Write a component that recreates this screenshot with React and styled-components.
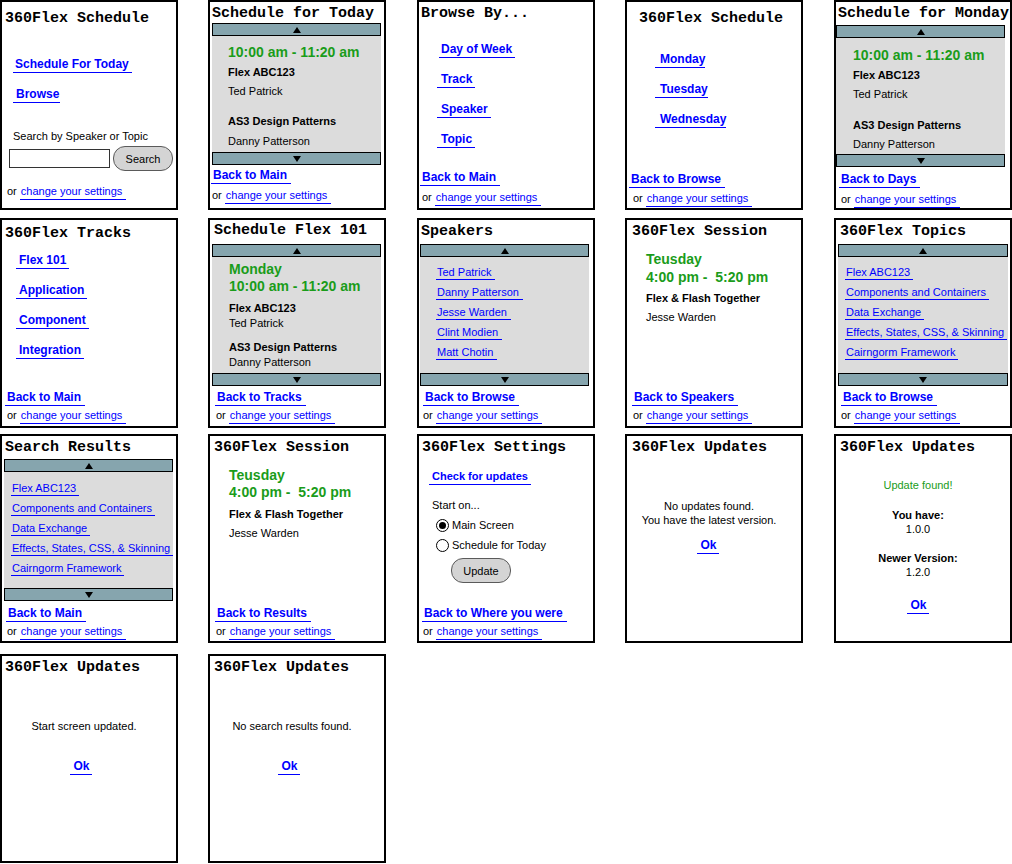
import React from 'react';
import styled, { createGlobalStyle } from 'styled-components';

const BLUE = '#0000ff';
const GREEN = '#1a9c1a';
const BAR = '#86a5ae';
const LIST_BG = '#dcdcdc';
const SANS = '"Liberation Sans", Arial, sans-serif';
const MONO = '"Liberation Mono", "Courier New", monospace';

const GlobalStyle = createGlobalStyle`
  html, body {
    margin: 0;
    padding: 0;
    background: #fff;
  }
  body {
    font-family: ${SANS};
  }
`;

const Board = styled.div`
  display: grid;
  grid-template-columns: 208px 209px 208px 209px 178px;
  grid-template-rows: 218px 216px 220px 210px;
  align-items: start;
  width: 1012px;
  height: 864px;
`;

const Screen = styled.div`
  box-sizing: border-box;
  width: 178px;
  height: ${props => props.$h || 210}px;
  border: 2px solid #000;
  background: #fff;
  display: flex;
  flex-direction: column;
  align-items: flex-start;
  overflow: hidden;
  font-family: ${SANS};
  color: #000;
`;

const Title = styled.div`
  font-family: ${MONO};
  font-weight: bold;
  font-size: 15px;
  line-height: 17px;
  white-space: nowrap;
  margin: ${props => props.$top}px 0 0 ${props => props.$left}px;
`;

const NavList = styled.div`
  display: flex;
  flex-direction: column;
  align-items: flex-start;
  gap: ${props => props.$gap ?? 14}px;
  margin: ${props => props.$top}px 0 0 ${props => props.$left}px;
`;

const NavLink = styled.span`
  display: inline-block;
  font-size: ${props => props.$size || 12}px;
  font-weight: bold;
  line-height: ${props => props.$lh || 14}px;
  color: ${BLUE};
  white-space: nowrap;
  padding: 0 ${props => props.$pr ?? 3}px 1px ${props => props.$pl ?? 2}px;
  margin-left: ${props => props.$ml || 0}px;
  border-bottom: 1px solid ${BLUE};
`;

const Caption = styled.div`
  font-size: 11px;
  line-height: 13px;
  white-space: nowrap;
  margin: ${props => props.$top}px 0 0 ${props => props.$left}px;
`;

const SearchRow = styled.div`
  display: flex;
  align-items: center;
  gap: 3px;
  margin: ${props => props.$top}px 0 0 ${props => props.$left}px;
`;

const SearchInput = styled.div`
  box-sizing: border-box;
  width: 101px;
  height: 19px;
  border: 1px solid #333;
  background: #fff;
`;

const PillButton = styled.div`
  box-sizing: border-box;
  width: 60px;
  height: 25px;
  border: 1px solid #5a5a5a;
  border-radius: 12px;
  background: #d4d4d4;
  display: flex;
  align-items: center;
  justify-content: center;
  font-size: 11px;
  margin: ${props => props.$top || 0}px 0 0 ${props => props.$left || 0}px;
`;

const Footer = styled.div`
  margin-top: auto;
  display: flex;
  flex-direction: column;
  align-items: flex-start;
  gap: ${props => props.$gap ?? 4}px;
  padding-bottom: ${props => props.$pb}px;
`;

const BackLink = styled(NavLink)`
  margin-left: ${props => props.$left}px;
  padding-right: 4px;
`;

const SettingsLine = styled.div`
  font-size: 11px;
  line-height: 13px;
  white-space: nowrap;
  margin-left: ${props => props.$left}px;
`;

const SmallLink = styled.span`
  display: inline-block;
  color: ${BLUE};
  font-size: 11px;
  line-height: 13px;
  white-space: nowrap;
  padding: 0 ${props => props.$pr ?? 4}px ${props => props.$pb ?? 1}px 1px;
  border-bottom: 1px solid ${BLUE};
`;

const Scroller = styled.div`
  display: flex;
  flex-direction: column;
  width: ${props => props.$w || 169}px;
  margin: ${props => props.$top}px 0 0 ${props => props.$left}px;
`;

const ScrollBar = styled.div`
  box-sizing: border-box;
  height: 13px;
  border: 1px solid #000;
  background: ${BAR};
  display: flex;
  align-items: center;
  justify-content: center;
`;

const Arrow = styled.span`
  width: 0;
  height: 0;
  border-left: 4px solid transparent;
  border-right: 4px solid transparent;
  ${props => props.$down
    ? 'border-top: 6px solid #000;'
    : 'border-bottom: 6px solid #000;'}
`;

const ListArea = styled.div`
  box-sizing: border-box;
  height: 116px;
  background: ${LIST_BG};
  display: flex;
  flex-direction: column;
  align-items: flex-start;
  gap: ${props => props.$gap || 0}px;
  padding: ${props => props.$pt}px 0 0 ${props => props.$pl}px;
  overflow: hidden;
`;

const TimeLabel = styled.div`
  color: ${GREEN};
  font-size: 14px;
  font-weight: bold;
  line-height: 17px;
  white-space: nowrap;
  margin-top: ${props => props.$mt || 0}px;
`;

const SessionName = styled.div`
  font-size: 11px;
  font-weight: bold;
  line-height: 13px;
  white-space: nowrap;
  margin-top: ${props => props.$mt || 0}px;
`;

const SpeakerName = styled.div`
  font-size: 11px;
  line-height: 13px;
  white-space: nowrap;
  margin-top: ${props => props.$mt || 0}px;
`;

const SessionBlock = styled.div`
  display: flex;
  flex-direction: column;
  align-items: flex-start;
  margin: ${props => props.$top}px 0 0 ${props => props.$left}px;
`;

const RadioGroup = styled.div`
  display: flex;
  flex-direction: column;
  margin: ${props => props.$top}px 0 0 ${props => props.$left}px;
`;

const RadioRow = styled.div`
  height: 20px;
  display: flex;
  align-items: center;
  gap: 3px;
  font-size: 11px;
  white-space: nowrap;
`;

const RadioDot = styled.span`
  box-sizing: border-box;
  width: 13px;
  height: 13px;
  border: 1px solid #000;
  border-radius: 50%;
  background: #fff;
  display: flex;
  align-items: center;
  justify-content: center;
  &::after {
    content: '';
    width: 7px;
    height: 7px;
    border-radius: 50%;
    background: ${props => (props.$on ? '#000' : 'transparent')};
  }
`;

const Notice = styled.div`
  align-self: stretch;
  box-sizing: border-box;
  display: flex;
  flex-direction: column;
  align-items: center;
  padding-right: 10px;
  margin-top: ${props => props.$top}px;
`;

const NoticeText = styled.div`
  font-size: 11px;
  line-height: 14px;
  text-align: center;
  white-space: nowrap;
  color: ${props => props.$color || '#000'};
  font-weight: ${props => (props.$bold ? 'bold' : 'normal')};
  margin-top: ${props => props.$mt || 0}px;
`;

const OkLink = styled(NavLink)`
  margin-top: ${props => props.$mt}px;
  margin-right: ${props => props.$mr || 0}px;
  padding: 0 2px 1px 3px;
`;

const Settings = ({ left }) => (
  <SettingsLine $left={left}>
    or <SmallLink>change your settings</SmallLink>
  </SettingsLine>
);

const ScreenFooter = ({ back, backLeft, orLeft, gap, pb }) => (
  <Footer $gap={gap} $pb={pb}>
    {back && <BackLink $left={backLeft}>{back}</BackLink>}
    <Settings left={orLeft} />
  </Footer>
);

const ScrollList = ({ top, left, width, pt, pl, gap, children }) => (
  <Scroller $top={top} $left={left} $w={width}>
    <ScrollBar><Arrow /></ScrollBar>
    <ListArea $pt={pt} $pl={pl} $gap={gap}>{children}</ListArea>
    <ScrollBar><Arrow $down /></ScrollBar>
  </Scroller>
);

const topics = [
  'Flex ABC123',
  'Components and Containers',
  'Data Exchange',
  'Effects, States, CSS, & Skinning',
  'Cairngorm Framework',
];

const speakers = ['Ted Patrick', 'Danny Patterson', 'Jesse Warden', 'Clint Modien', 'Matt Chotin'];

const App = () => (
  <>
    <GlobalStyle />
    <Board>
      {/* row 1 */}
      <Screen>
        <Title $top={8} $left={3}>360Flex Schedule</Title>
        <NavList $top={30} $left={11}>
          <NavLink>Schedule For Today</NavLink>
          <NavLink $pl={3} $pr={1}>Browse</NavLink>
        </NavList>
        <Caption $top={27} $left={11}>Search by Speaker or Topic</Caption>
        <SearchRow $top={3} $left={7}>
          <SearchInput />
          <PillButton>Search</PillButton>
        </SearchRow>
        <ScreenFooter orLeft={5} pb={8} />
      </Screen>

      <Screen>
        <Title $top={3} $left={2}>Schedule for Today</Title>
        <ScrollList top={1} left={2} pt={8} pl={16}>
          <TimeLabel>10:00 am - 11:20 am</TimeLabel>
          <SessionName $mt={5}>Flex ABC123</SessionName>
          <SpeakerName $mt={6}>Ted Patrick</SpeakerName>
          <SessionName $mt={17}>AS3 Design Patterns</SessionName>
          <SpeakerName $mt={7}>Danny Patterson</SpeakerName>
        </ScrollList>
        <ScreenFooter back="Back to Main" backLeft={1} orLeft={2} gap={5} pb={4} />
      </Screen>

      <Screen>
        <Title $top={3} $left={2}>Browse By...</Title>
        <NavList $top={20} $left={18}>
          <NavLink $ml={2}>Day of Week</NavLink>
          <NavLink $pl={4}>Track</NavLink>
          <NavLink $pl={4}>Speaker</NavLink>
          <NavLink $pl={4}>Topic</NavLink>
        </NavList>
        <ScreenFooter back="Back to Main" backLeft={1} orLeft={3} gap={5} pb={2} />
      </Screen>

      <Screen>
        <Title $top={8} $left={12}>360Flex Schedule</Title>
        <NavList $top={25} $left={28}>
          <NavLink $pl={5} $pr={0}>Monday</NavLink>
          <NavLink $pl={5} $pr={0}>Tuesday</NavLink>
          <NavLink $pl={5} $pr={0}>Wednesday</NavLink>
        </NavList>
        <ScreenFooter back="Back to Browse" backLeft={2} orLeft={6} gap={4} pb={1} />
      </Screen>

      <Screen>
        <Title $top={3} $left={2}>Schedule for Monday</Title>
        <ScrollList top={3} left={0} pt={9} pl={17}>
          <TimeLabel>10:00 am - 11:20 am</TimeLabel>
          <SessionName $mt={5}>Flex ABC123</SessionName>
          <SpeakerName $mt={6}>Ted Patrick</SpeakerName>
          <SessionName $mt={18}>AS3 Design Patterns</SessionName>
          <SpeakerName $mt={6}>Danny Patterson</SpeakerName>
        </ScrollList>
        <ScreenFooter back="Back to Days" backLeft={3} orLeft={5} gap={5} pb={0} />
      </Screen>

      {/* row 2 */}
      <Screen>
        <Title $top={5} $left={3}>360Flex Tracks</Title>
        <NavList $top={11} $left={14}>
          <NavLink $pl={3}>Flex 101</NavLink>
          <NavLink $pl={3}>Application</NavLink>
          <NavLink $pl={3}>Component</NavLink>
          <NavLink $pl={3}>Integration</NavLink>
        </NavList>
        <ScreenFooter back="Back to Main" backLeft={3} orLeft={5} gap={3} pb={2} />
      </Screen>

      <Screen>
        <Title $top={2} $left={4}>Schedule Flex 101</Title>
        <ScrollList top={5} left={2} pt={4} pl={17}>
          <TimeLabel>Monday</TimeLabel>
          <TimeLabel>10:00 am - 11:20 am</TimeLabel>
          <SessionName $mt={7}>Flex ABC123</SessionName>
          <SpeakerName $mt={2}>Ted Patrick</SpeakerName>
          <SessionName $mt={11}>AS3 Design Patterns</SessionName>
          <SpeakerName $mt={2}>Danny Patterson</SpeakerName>
        </ScrollList>
        <ScreenFooter back="Back to Tracks" backLeft={5} orLeft={6} gap={3} pb={2} />
      </Screen>

      <Screen>
        <Title $top={3} $left={2}>Speakers</Title>
        <ScrollList top={4} left={1} pt={9} pl={16} gap={6}>
          {speakers.map(name => (
            <SmallLink key={name} $pb={0}>{name}</SmallLink>
          ))}
        </ScrollList>
        <ScreenFooter back="Back to Browse" backLeft={4} orLeft={4} gap={3} pb={2} />
      </Screen>

      <Screen>
        <Title $top={3} $left={5}>360Flex Session</Title>
        <SessionBlock $top={11} $left={19}>
          <TimeLabel>Teusday</TimeLabel>
          <TimeLabel $mt={1}>4:00 pm -&nbsp; 5:20 pm</TimeLabel>
          <SessionName $mt={6}>Flex &amp; Flash Together</SessionName>
          <SpeakerName $mt={6}>Jesse Warden</SpeakerName>
        </SessionBlock>
        <ScreenFooter back="Back to Speakers" backLeft={5} orLeft={6} gap={3} pb={2} />
      </Screen>

      <Screen>
        <Title $top={3} $left={4}>360Flex Topics</Title>
        <ScrollList top={4} left={2} width={170} pt={9} pl={7} gap={6}>
          {topics.map(t => (
            <SmallLink key={t} $pb={0} $pr={3}>{t}</SmallLink>
          ))}
        </ScrollList>
        <ScreenFooter back="Back to Browse" backLeft={5} orLeft={5} gap={3} pb={2} />
      </Screen>

      {/* row 3 */}
      <Screen $h={209}>
        <Title $top={3} $left={3}>Search Results</Title>
        <ScrollList top={3} left={2} pt={10} pl={7} gap={6}>
          {topics.map(t => (
            <SmallLink key={t} $pb={0} $pr={3}>{t}</SmallLink>
          ))}
        </ScrollList>
        <ScreenFooter back="Back to Main" backLeft={4} orLeft={5} gap={3} pb={1} />
      </Screen>

      <Screen $h={209}>
        <Title $top={3} $left={4}>360Flex Session</Title>
        <SessionBlock $top={11} $left={19}>
          <TimeLabel>Teusday</TimeLabel>
          <TimeLabel>4:00 pm -&nbsp; 5:20 pm</TimeLabel>
          <SessionName $mt={7}>Flex &amp; Flash Together</SessionName>
          <SpeakerName $mt={6}>Jesse Warden</SpeakerName>
        </SessionBlock>
        <ScreenFooter back="Back to Results" backLeft={5} orLeft={6} gap={3} pb={1} />
      </Screen>

      <Screen $h={209}>
        <Title $top={3} $left={3}>360Flex Settings</Title>
        <NavList $top={14} $left={10}>
          <NavLink $size={11} $lh={13} $pl={3}>Check for updates</NavLink>
        </NavList>
        <Caption $top={14} $left={13}>Start on...</Caption>
        <RadioGroup $top={3} $left={17}>
          <RadioRow><RadioDot $on />Main Screen</RadioRow>
          <RadioRow><RadioDot />Schedule for Today</RadioRow>
        </RadioGroup>
        <PillButton $top={3} $left={32}>Update</PillButton>
        <ScreenFooter back="Back to Where you were" backLeft={3} orLeft={4} gap={3} pb={1} />
      </Screen>

      <Screen $h={209}>
        <Title $top={3} $left={5}>360Flex Updates</Title>
        <Notice $top={43}>
          <NoticeText>No updates found.</NoticeText>
          <NoticeText>You have the latest version.</NoticeText>
          <OkLink $mt={11} $mr={2}>Ok</OkLink>
        </Notice>
      </Screen>

      <Screen $h={209}>
        <Title $top={3} $left={4}>360Flex Updates</Title>
        <Notice $top={22}>
          <NoticeText $color={GREEN}>Update found!</NoticeText>
          <NoticeText $bold $mt={16}>You have:</NoticeText>
          <NoticeText>1.0.0</NoticeText>
          <NoticeText $bold $mt={15}>Newer Version:</NoticeText>
          <NoticeText>1.2.0</NoticeText>
          <OkLink $mt={19}>Ok</OkLink>
        </Notice>
      </Screen>

      {/* row 4 */}
      <Screen $h={209}>
        <Title $top={3} $left={3}>360Flex Updates</Title>
        <Notice $top={43}>
          <NoticeText>Start screen updated.</NoticeText>
          <OkLink $mt={26} $mr={6}>Ok</OkLink>
        </Notice>
      </Screen>

      <Screen $h={209}>
        <Title $top={3} $left={4}>360Flex Updates</Title>
        <Notice $top={43}>
          <NoticeText>No search results found.</NoticeText>
          <OkLink $mt={26} $mr={6}>Ok</OkLink>
        </Notice>
      </Screen>
    </Board>
  </>
);

export default App;
